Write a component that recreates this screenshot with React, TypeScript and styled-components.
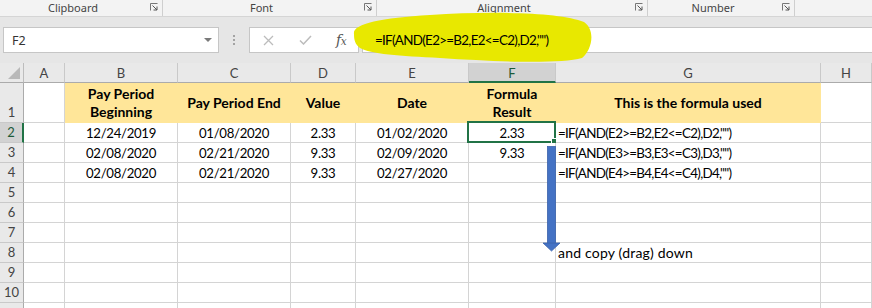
import React from 'react';
import styled, { createGlobalStyle } from 'styled-components';

const Global = createGlobalStyle`
  html, body { margin: 0; padding: 0; background: #ffffff; }
  body { width: 872px; height: 308px; overflow: hidden; font-family: Lato, "Liberation Sans", sans-serif; }
  #root { width: 872px; height: 308px; }
`;

const Root = styled.div`
  position: relative;
  width: 872px;
  height: 308px;
  overflow: hidden;
  display: flex;
  flex-direction: column;
`;

/* ---------- ribbon group labels ---------- */
const RibbonLabels = styled.div`
  display: flex;
  height: 17px;
  flex: none;
  box-sizing: border-box;
  background: #f3f3f3;
  border-bottom: 1px solid #d5d5d5;
`;

const Group = styled.div<{ $w?: number }>`
  ${p => (p.$w ? `width: ${p.$w}px; flex: none;` : 'flex: 1;')}
  display: flex;
  align-items: center;
  box-sizing: border-box;
  border-right: ${p => (p.$w ? '1px solid #cfcfcf' : 'none')};
`;

const GroupLabel = styled.span`
  flex: 1;
  text-align: center;
  font-family: "Noto Sans", "Open Sans", sans-serif;
  font-size: 11px;
  line-height: 16px;
  color: #444444;
  white-space: nowrap;
`;

const Launcher = styled.svg`
  flex: none;
  width: 8px;
  height: 8px;
  margin: 0 4px 2px 4px;
`;

const LauncherIcon = () => (
  <Launcher viewBox="0 0 8 8">
    <path d="M0.5 7.5V0.5H7.5" fill="none" stroke="#777" strokeWidth="1" />
    <path d="M2.5 2.5L7 7M7 3.5V7H3.5" fill="none" stroke="#555" strokeWidth="1" />
  </Launcher>
);

/* ---------- formula band ---------- */
const FormulaBand = styled.div`
  height: 46px;
  flex: none;
  box-sizing: border-box;
  background: #e6e6e6;
  display: flex;
  align-items: flex-start;
  padding: 10px 0 0 3px;
`;

const NameBox = styled.div`
  width: 216px;
  height: 26px;
  flex: none;
  box-sizing: border-box;
  background: #ffffff;
  border: 1px solid #c6c6c6;
  display: flex;
  align-items: center;
  justify-content: space-between;
  padding: 0 6px 0 8px;
  font-family: "Noto Sans", "Open Sans", sans-serif;
  font-size: 12.5px;
  color: #333333;
`;

const DropArrow = styled.span`
  width: 0;
  height: 0;
  border-left: 4px solid transparent;
  border-right: 4px solid transparent;
  border-top: 4px solid #7a7a7a;
`;

const Grip = styled.div`
  width: 30px;
  height: 26px;
  flex: none;
  display: flex;
  flex-direction: column;
  align-items: center;
  justify-content: center;
  gap: 2px;
`;

const GripDot = styled.span`
  width: 2px;
  height: 2px;
  background: #a3a3a3;
`;

const FxBox = styled.div`
  width: 110px;
  height: 26px;
  flex: none;
  box-sizing: border-box;
  background: #ffffff;
  border: 1px solid #c6c6c6;
  display: grid;
  grid-template-columns: 37px 37px 1fr;
  align-items: center;
  justify-items: center;
`;

const FxLabel = styled.span`
  font-family: "DejaVu Serif", "Liberation Serif", serif;
  font-style: italic;
  font-size: 14px;
  color: #555555;
  letter-spacing: -0.5px;
  & > small { font-size: 10.5px; }
`;

const FormulaInput = styled.div`
  flex: 1;
  height: 26px;
  margin-left: 3px;
  box-sizing: border-box;
  background: #ffffff;
  border: 1px solid #c6c6c6;
  border-right: none;
  display: flex;
  align-items: center;
  padding-left: 12px;
`;

const FormulaText = styled.span`
  position: relative;
  z-index: 2;
  font-family: Lato, "Liberation Sans", sans-serif;
  font-size: 13.4px;
  letter-spacing: -0.7px;
  color: #000000;
  white-space: nowrap;
`;

const Highlight = styled.svg`
  position: absolute;
  left: 350px;
  top: 10px;
  width: 245px;
  height: 56px;
  z-index: 1;
`;

/* ---------- sheet ---------- */
const Sheet = styled.div`
  position: relative;
  flex: 1;
  display: grid;
  grid-template-columns: 24px 41px 113px 113px 65px 113px 87px 265px 1fr;
  grid-template-rows: 20px 40px repeat(11, 20px);
  font-family: Lato, "Liberation Sans", sans-serif;
  font-size: 13px;
  color: #000000;
`;

const Corner = styled.div`
  position: relative;
  background: #e9e9e9;
  border-right: 1px solid #bdbdbd;
  border-bottom: 1px solid #ababab;
  box-sizing: border-box;
  &::after {
    content: '';
    position: absolute;
    right: 3px;
    bottom: 3px;
    width: 0;
    height: 0;
    border-left: 12px solid transparent;
    border-bottom: 12px solid #b9b9b9;
  }
`;

const ColHead = styled.div<{ $active?: boolean }>`
  box-sizing: border-box;
  background: ${p => (p.$active ? '#d2d2d2' : '#e9e9e9')};
  border-right: 1px solid #c9c9c9;
  border-bottom: ${p => (p.$active ? '2px solid #217346' : '1px solid #ababab')};
  display: flex;
  align-items: center;
  justify-content: center;
  padding-top: ${p => (p.$active ? '1px' : '0')};
  color: ${p => (p.$active ? '#1d5b39' : '#444444')};
`;

const RowHead = styled.div<{ $active?: boolean }>`
  box-sizing: border-box;
  background: ${p => (p.$active ? '#d2d2d2' : '#e9e9e9')};
  border-right: ${p => (p.$active ? '2px solid #217346' : '1px solid #ababab')};
  border-bottom: 1px solid #c9c9c9;
  display: flex;
  align-items: flex-end;
  justify-content: center;
  line-height: 19px;
  color: ${p => (p.$active ? '#1d5b39' : '#444444')};
`;

type Kind = 'head' | 'num' | 'formula' | 'text';

const kindStyle: Record<Kind, string> = {
  head: 'font-weight: 700; font-size: 14px; letter-spacing: 0;',
  num: 'font-weight: 400; font-size: 13.2px; letter-spacing: -0.3px;',
  formula: 'font-weight: 400; font-size: 13.4px; letter-spacing: -0.7px;',
  text: 'font-weight: 400; font-size: 14px; letter-spacing: 0.2px;',
};

const Cell = styled.div<{ $fill?: string; $align?: 'left' | 'center'; $kind: Kind }>`
  position: relative;
  box-sizing: border-box;
  background: ${p => p.$fill || '#ffffff'};
  border-right: 1px solid ${p => p.$fill || '#d4d4d4'};
  border-bottom: 1px solid ${p => p.$fill || '#d4d4d4'};
  display: flex;
  align-items: center;
  justify-content: ${p => (p.$align === 'left' ? 'flex-start' : 'center')};
  text-align: ${p => (p.$align === 'left' ? 'left' : 'center')};
  padding: 1px 0 0 ${p => (p.$align === 'left' ? '2px' : '0')};
  ${p => kindStyle[p.$kind]}
  line-height: 18px;
  white-space: pre;
`;

const Selection = styled.div`
  position: absolute;
  left: -2px;
  top: -2px;
  right: -1px;
  bottom: -1px;
  border: 2px solid #217346;
  pointer-events: none;
`;

const FillHandle = styled.span`
  position: absolute;
  right: -4px;
  bottom: -4px;
  width: 5px;
  height: 5px;
  background: #217346;
  border: 1px solid #ffffff;
`;

const Arrow = styled.svg`
  position: absolute;
  left: 542px;
  top: 80px;
  width: 20px;
  height: 110px;
`;

const YELLOW = '#ffe699';

type CellDef = {
  t?: string;
  fill?: string;
  align?: 'left' | 'center';
  kind?: Kind;
  selected?: boolean;
};

const header: CellDef[] = [
  {},
  { t: 'Pay Period\nBeginning', fill: YELLOW, kind: 'head' },
  { t: 'Pay Period End', fill: YELLOW, kind: 'head' },
  { t: 'Value', fill: YELLOW, kind: 'head' },
  { t: 'Date', fill: YELLOW, kind: 'head' },
  { t: 'Formula\nResult', fill: YELLOW, kind: 'head' },
  { t: 'This is the formula used', fill: YELLOW, kind: 'head' },
  {},
];

const data: string[][] = [
  ['12/24/2019', '01/08/2020', '2.33', '01/02/2020', '2.33', '=IF(AND(E2>=B2,E2<=C2),D2,"")'],
  ['02/08/2020', '02/21/2020', '9.33', '02/09/2020', '9.33', '=IF(AND(E3>=B3,E3<=C3),D3,"")'],
  ['02/08/2020', '02/21/2020', '9.33', '02/27/2020', '', '=IF(AND(E4>=B4,E4<=C4),D4,"")'],
];

const buildRow = (r: number): CellDef[] => {
  if (r === 1) return header;
  const d = data[r - 2];
  if (d) {
    return [
      {},
      { t: d[0] },
      { t: d[1] },
      { t: d[2] },
      { t: d[3] },
      { t: d[4], selected: r === 2 },
      { t: d[5], align: 'left', kind: 'formula' },
      {},
    ];
  }
  if (r === 8) return [{}, {}, {}, {}, {}, {}, { t: 'and copy (drag) down', align: 'left', kind: 'text' }, {}];
  return [{}, {}, {}, {}, {}, {}, {}, {}];
};

const COLS = ['A', 'B', 'C', 'D', 'E', 'F', 'G', 'H'];
const ROWS = Array.from({ length: 11 }, (_, i) => i + 1);

const groups = [
  { label: 'Clipboard', w: 163 },
  { label: 'Font', w: 214 },
  { label: 'Alignment', w: 271 },
  { label: 'Number', w: 147 },
];

export default function App() {
  return (
    <Root>
      <Global />
      <RibbonLabels>
        {groups.map(g => (
          <Group key={g.label} $w={g.w}>
            <GroupLabel>{g.label}</GroupLabel>
            <LauncherIcon />
          </Group>
        ))}
        <Group />
      </RibbonLabels>

      <FormulaBand>
        <NameBox>
          <span>F2</span>
          <DropArrow />
        </NameBox>
        <Grip>
          <GripDot />
          <GripDot />
          <GripDot />
        </Grip>
        <FxBox>
          <svg width="11" height="11" viewBox="0 0 11 11">
            <path d="M1 1L10 10M10 1L1 10" stroke="#bcbcbc" strokeWidth="1.3" fill="none" />
          </svg>
          <svg width="13" height="10" viewBox="0 0 13 10">
            <path d="M1 5.5L4.5 9L12 1" stroke="#bcbcbc" strokeWidth="1.5" fill="none" />
          </svg>
          <FxLabel>
            f<small>x</small>
          </FxLabel>
        </FxBox>
        <FormulaInput>
          <FormulaText>=IF(AND(E2&gt;=B2,E2&lt;=C2),D2,"")</FormulaText>
        </FormulaInput>
      </FormulaBand>

      <Highlight viewBox="350 10 245 56">
        <path
          d="M354 34 C352 24 380 18 430 15 C490 11 560 12 584 22 C596 30 592 50 582 58 C560 64 500 62 440 58 C400 56 370 54 360 48 C355 44 354 40 354 34 Z"
          fill="#e8e800"
        />
      </Highlight>

      <Sheet>
        <Corner />
        {COLS.map(c => (
          <ColHead key={c} $active={c === 'F'}>
            {c}
          </ColHead>
        ))}
        {ROWS.map(r => (
          <React.Fragment key={r}>
            <RowHead $active={r === 2}>{r <= 10 ? r : ''}</RowHead>
            {buildRow(r).map((cell, i) => (
              <Cell key={i} $fill={cell.fill} $align={cell.align} $kind={cell.kind || 'num'}>
                {cell.t}
                {cell.selected && (
                  <Selection>
                    <FillHandle />
                  </Selection>
                )}
              </Cell>
            ))}
          </React.Fragment>
        ))}
        <Arrow viewBox="542 143 20 110">
          <rect x="547.5" y="146.5" width="8" height="97" fill="#4472c4" stroke="#3a62ab" strokeWidth="0.8" />
          <polygon points="543,243 560,243 551.5,251" fill="#4472c4" stroke="#3a62ab" strokeWidth="0.8" />
        </Arrow>
      </Sheet>
    </Root>
  );
}
